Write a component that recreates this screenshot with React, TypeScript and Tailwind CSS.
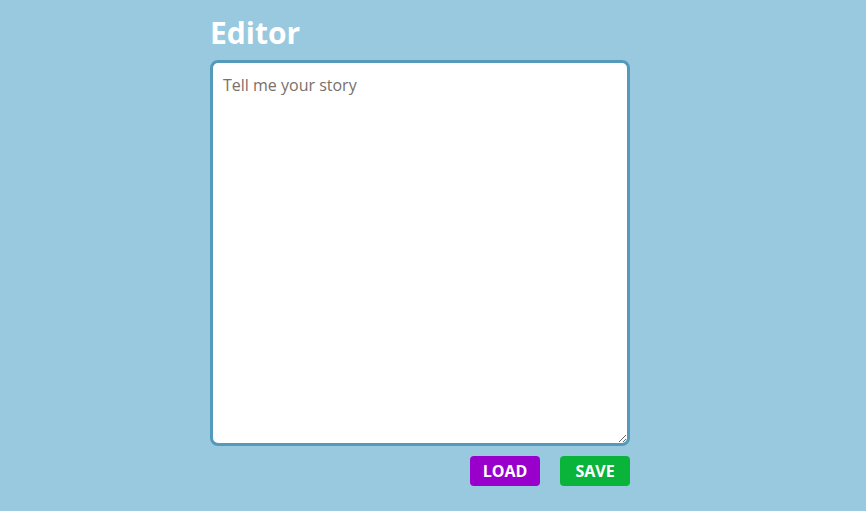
import React from "react";

export default function App() {
  return (
    <div className="min-h-[511px] w-full bg-[#99c9df] font-['Open_Sans',sans-serif]">
      <div className="pl-[210px] pt-[14px] w-[640px]">
        <h1 className="text-[30px] leading-[38px] font-bold text-white m-0">Editor</h1>
        <textarea
          placeholder="Tell me your story"
          className="mt-[8px] block w-[420px] h-[386px] rounded-[8px] border-[3px] border-[#5599bb] bg-white px-[10px] py-[10px] text-[16px] leading-[24px] text-[#333] placeholder:text-[#7a6f6a] outline-none"
        />
        <div className="flex justify-end gap-[20px] mt-[10px] w-[420px]">
          <button className="w-[70px] h-[30px] rounded-[4px] bg-[#9900cc] text-white font-bold text-[16px] leading-none">LOAD</button>
          <button className="w-[70px] h-[30px] rounded-[4px] bg-[#0ab33a] text-white font-bold text-[16px] leading-none">SAVE</button>
        </div>
      </div>
    </div>
  );
}
